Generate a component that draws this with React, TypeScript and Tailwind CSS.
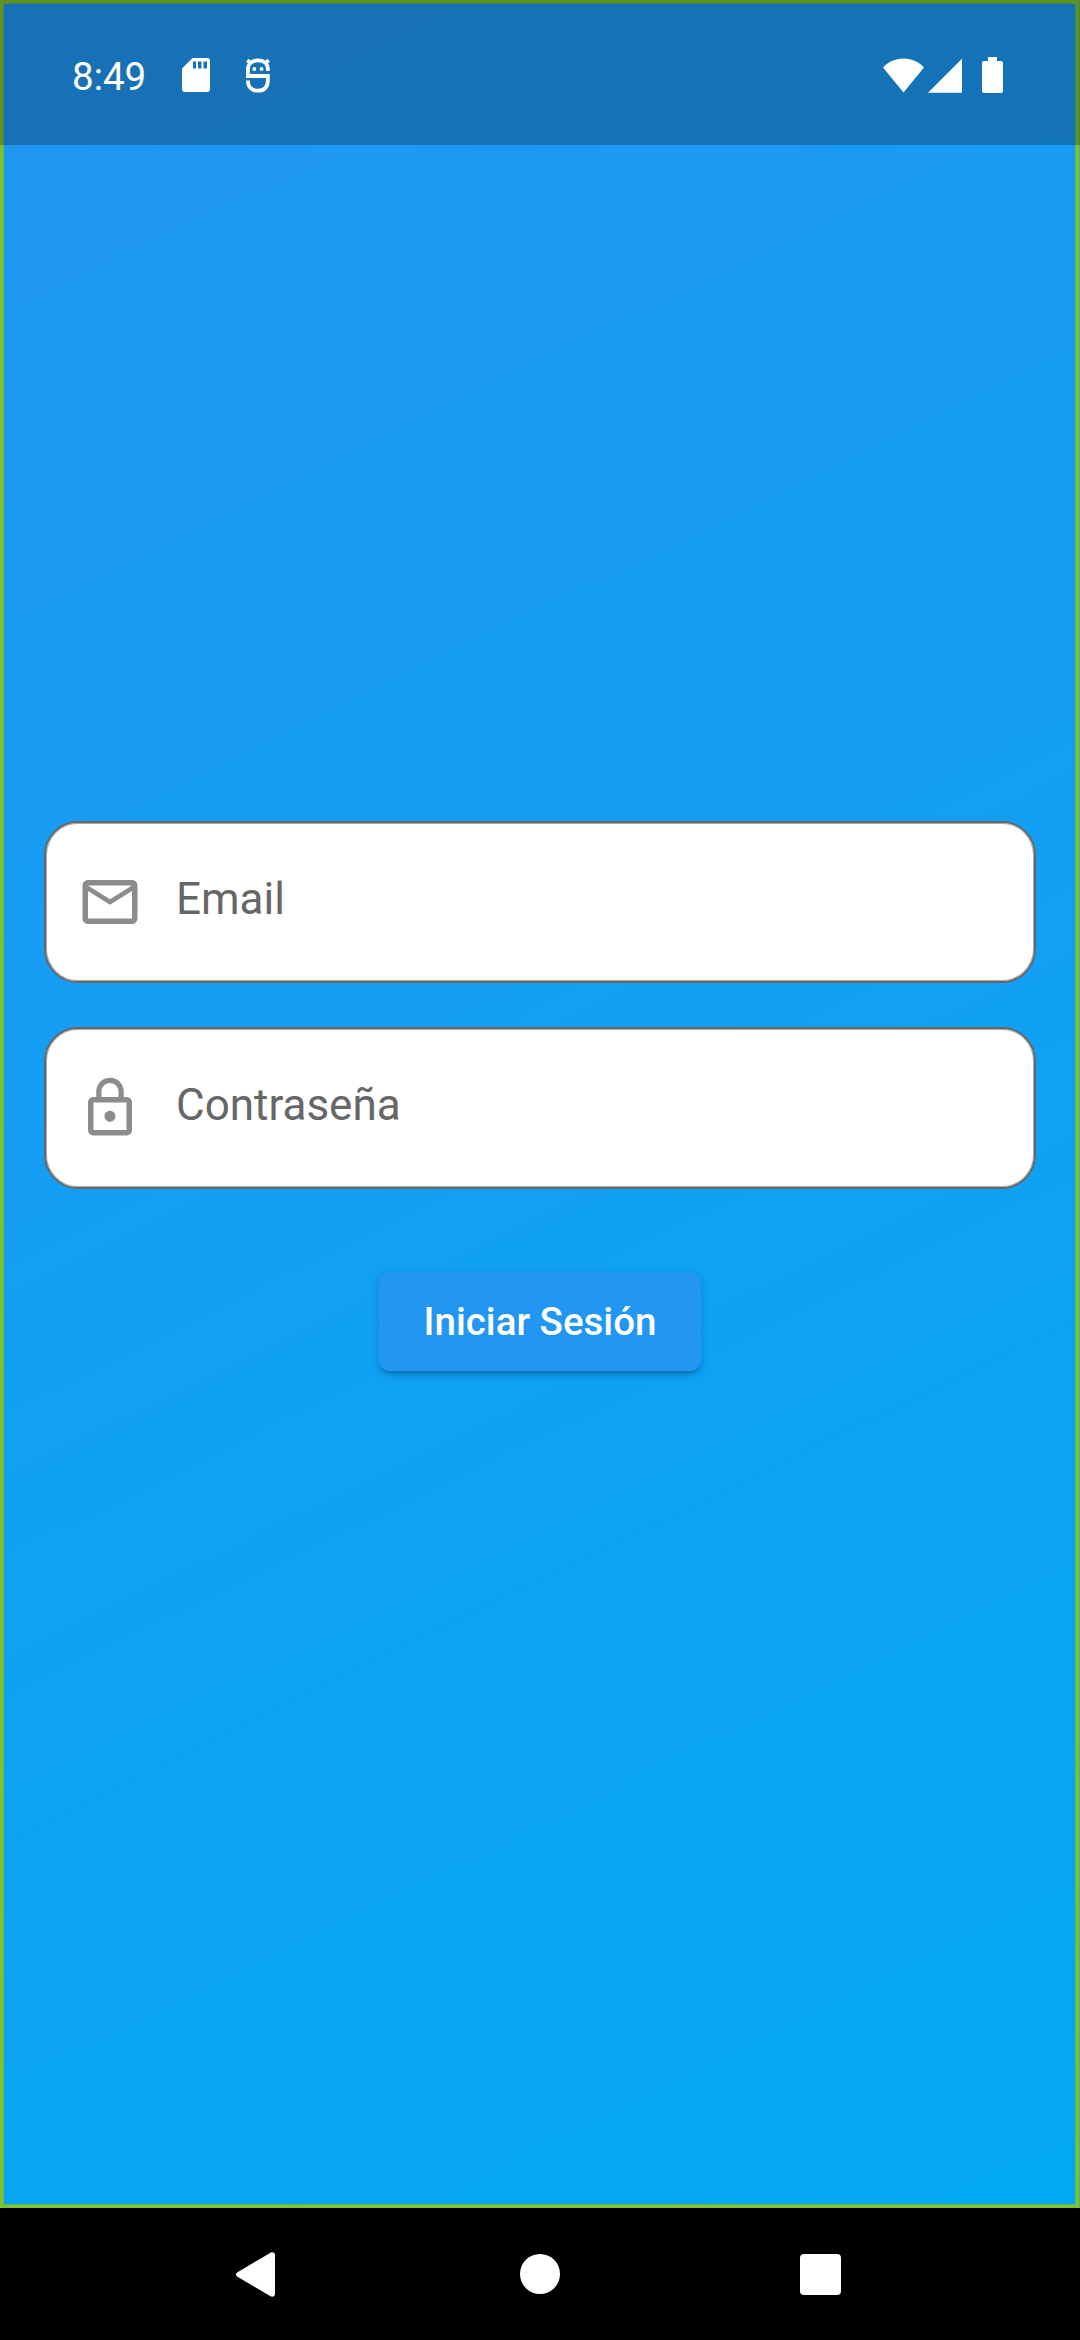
import React from "react";

function StatusBar() {
  return (
    <header className="flex h-[145px] shrink-0 items-center bg-black/25 pt-[5px] pl-[72px] pr-[77px] text-white">
      <span className="w-[110px] pt-[3px] text-[38.5px] leading-[45px] whitespace-nowrap">8:49</span>
      <svg className="h-[34px] w-7" viewBox="0 0 28 34" fill="currentColor">
        <path fillRule="evenodd" d="M10.500 0H25a3 3 0 0 1 3 3v28a3 3 0 0 1-3 3H3a3 3 0 0 1-3-3V10.500zM11 3.500v7h3v-7zm5 0v7h3.500v-7zm5.500 0v7H25v-7z" />
      </svg>
      <svg className="ml-[35px] h-[35px] w-[26px]" viewBox="0 0 26 35" fill="none" stroke="currentColor" strokeWidth="3.800">
        <path d="M22.900 13v-1.500C22.900 6 19 2.400 13 2.400S2.900 6 2.900 11.500V18h20v4.500C22.900 29 19 32.700 13 32.700S2.900 29 2.900 22.500M2.400 2.200l3.600 3.600M23.600 2.200l-3.600 3.600" />
        <circle cx="9.300" cy="11" r="1.900" fill="currentColor" stroke="none" />
        <circle cx="16.600" cy="11" r="1.900" fill="currentColor" stroke="none" />
      </svg>
      <svg className="ml-auto h-[35px] w-[41px]" viewBox="0 0 41 35" fill="currentColor">
        <path d="M20.500 34.500 0 9.500C5 4 12 .5 20.500 .5S36 4 41 9.500z" />
      </svg>
      <svg className="ml-1 h-[35px] w-[34px]" viewBox="0 0 34 35" fill="currentColor">
        <path d="M34 .8V34.800H0z" />
      </svg>
      <svg className="ml-5 h-9 w-[21px]" viewBox="0 0 21 36" fill="currentColor">
        <path d="M6 0h9v4h4a2 2 0 0 1 2 2v28a2 2 0 0 1-2 2H2a2 2 0 0 1-2-2V6a2 2 0 0 1 2-2h4z" />
      </svg>
    </header>
  );
}

function Field({ label, type, icon }: { label: string; type: string; icon: string }) {
  return (
    <label className="flex h-[162px] items-center rounded-[34px] border-2 border-[#666666] bg-white pl-[31px] shadow-[inset_0_0_0_1px_#a8a8a8]">
      <svg className="h-[66px] w-[66px] shrink-0" viewBox="0 0 24 24" fill="#8c8c8c">
        <path d={icon} />
      </svg>
      <input
        type={type}
        placeholder={label}
        className="mb-1.5 ml-[33px] min-w-0 flex-1 bg-transparent text-[44px] leading-[52px] text-[#666666] outline-none placeholder:text-[#666666]"
      />
    </label>
  );
}

const MAIL =
  "M22 6c0-1.1-.9-2-2-2H4c-1.1 0-2 .9-2 2v12c0 1.1.9 2 2 2h16c1.1 0 2-.9 2-2V6zm-2 0l-8 5-8-5h16zm0 12H4V8l8 5 8-5v10z";
const LOCK =
  "M12 17c1.1 0 2-.9 2-2s-.9-2-2-2-2 .9-2 2 .9 2 2 2zm6-9h-1V6c0-2.76-2.24-5-5-5S7 3.24 7 6v2H6c-1.1 0-2 .9-2 2v10c0 1.1.9 2 2 2h12c1.1 0 2-.9 2-2V10c0-1.1-.9-2-2-2zM8.900 6c0-1.710 1.390-3.100 3.100-3.100s3.100 1.390 3.100 3.100v2H8.900V6zM18 20H6V10h12v10z";

function NavigationBar() {
  return (
    <nav className="flex h-[132px] shrink-0 items-center bg-black pl-[236px] text-white">
      <svg className="h-[45px] w-[39px]" viewBox="0 0 39 45" fill="currentColor">
        <path d="M1.500 20.300 34.500 .8C36.500-.3 39 .8 39 3v39c0 2.200-2.500 3.300-4.500 2.200L1.500 24.700c-2-1.200-2-3.200 0-4.400z" />
      </svg>
      <div className="ml-[245px] h-10 w-10 rounded-full bg-white" />
      <div className="mt-px ml-[240px] h-[41px] w-[41px] rounded-[4px] bg-white" />
    </nav>
  );
}

export default function App() {
  return (
    <div className="flex h-[2340px] w-[1080px] flex-col font-[Roboto,sans-serif]">
      <main className="flex h-[2208px] flex-col bg-[linear-gradient(153.94deg,#2196f3,#03a9f4)] shadow-[inset_-1px_0_0_#3fb59a,inset_-4px_0_0_#83c328,inset_0_0_0_3px_#83c328,inset_-5px_0_0_#56b47a,inset_0_0_0_4px_#56b47a]">
        <StatusBar />
        <form className="flex flex-col gap-11 px-11 pt-[676px]" onSubmit={(e) => e.preventDefault()}>
          <Field label="Email" type="email" icon={MAIL} />
          <Field label="Contraseña" type="password" icon={LOCK} />
          <button className="mt-[39px] h-[99px] w-[322px] self-center rounded-[11px] bg-[#2196f3] text-[38.5px] font-medium text-white shadow-[0_6px_4px_-4px_rgba(0,0,0,0.18),0_4px_6px_rgba(0,0,0,0.12),0_2px_10px_rgba(0,0,0,0.08)]">
            Iniciar Sesión
          </button>
        </form>
      </main>
      <NavigationBar />
    </div>
  );
}
